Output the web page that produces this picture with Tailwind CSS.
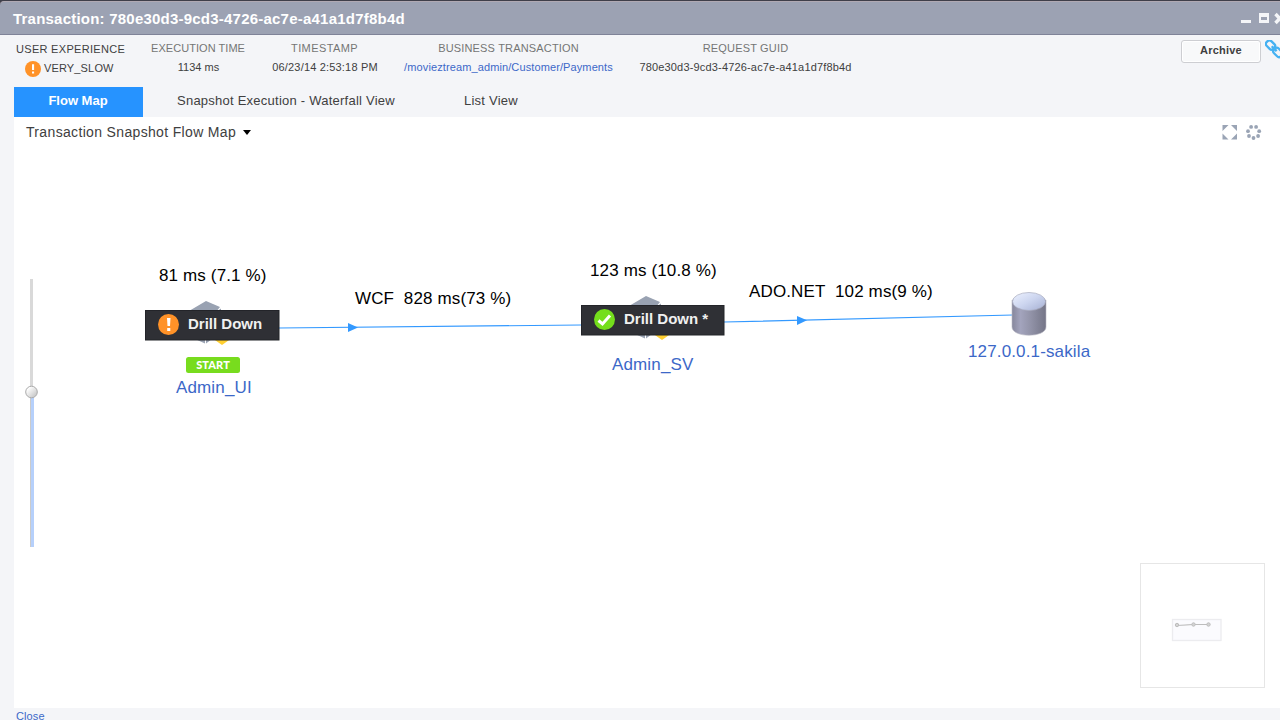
<!DOCTYPE html>
<html lang="en">
<head>
<meta charset="utf-8">
<title>Transaction Snapshot</title>
<script src="https://cdn.jsdelivr.net/npm/@tailwindcss/browser@4"></script>
</head>
<body class="bg-[#3f3f4a] font-['Liberation_Sans',Arial,sans-serif] overflow-hidden">
<div class="flex h-[720px] w-[1280px] flex-col overflow-hidden pt-px">
  <header class="flex h-[34px] shrink-0 items-center justify-between rounded-tl-[4px] border-t border-b border-t-[#b0a9b3] border-b-[#7f8398] bg-[#9ca2b3] pl-[13px]">
    <h1 class="pt-[2px] text-[15px] leading-[18px] font-bold tracking-[0.22px] whitespace-nowrap text-white">Transaction: 780e30d3-9cd3-4726-ac7e-a41a1d7f8b4d</h1>
    <svg class="h-[14px] w-[40px]" viewBox="0 0 40 14" fill="none">
      <rect x="1" y="9" width="10" height="3" fill="#f4f5f8"/>
      <path d="M19 2H29V12H19ZM21 6V9H27V6Z" fill="#f4f5f8" fill-rule="evenodd"/>
      <path d="M35.5 3L44 12M44 3L35.5 12" stroke="#f4f5f8" stroke-width="3.4"/>
    </svg>
  </header>

  <div class="flex min-h-0 flex-1 flex-col bg-[#f4f5f8]">
    <section class="flex h-[52px] shrink-0 justify-between text-[11px] leading-[13px] whitespace-nowrap text-[#404040]">
      <div class="flex gap-[26px] pt-[7px] pl-4">
        <div class="w-[109px]">
          <div class="pt-px tracking-[0.3px]">USER EXPERIENCE</div>
          <div class="mt-[4px] flex items-center pl-[9px]">
            <svg class="mt-px h-4 w-4" viewBox="0 0 16 16"><circle cx="8" cy="8" r="8" fill="#ff9228"/><path d="M7 3.2H9.1V9H7ZM7 10.6H9.1V12.6H7Z" fill="#fff"/></svg>
            <span class="ml-[3px] tracking-[0.15px]">VERY_SLOW</span>
          </div>
        </div>
        <div class="w-[94px] text-center">
          <div class="tracking-[0.05px] text-[#757575]">EXECUTION TIME</div>
          <div class="-mr-px mt-[6px]">1134 ms</div>
        </div>
        <div class="w-[107px] text-center">
          <div class="tracking-[0.4px] text-[#757575]">TIMESTAMP</div>
          <div class="-mr-px mt-[6px] tracking-[0.18px]">06/23/14 2:53:18 PM</div>
        </div>
        <div class="w-[209px] text-center">
          <div class="tracking-[0.17px] text-[#757575]">BUSINESS TRANSACTION</div>
          <div class="mt-[6px] tracking-[0.11px] text-[#3c68c8]">/movieztream_admin/Customer/Payments</div>
        </div>
        <div class="w-[213px] text-center">
          <div class="tracking-[0.17px] text-[#757575]">REQUEST GUID</div>
          <div class="mt-[6px] tracking-[0.17px]">780e30d3-9cd3-4726-ac7e-a41a1d7f8b4d</div>
        </div>
      </div>
      <div class="flex gap-1 pt-[5px]">
        <button class="h-[23px] w-[80px] rounded-[3px] border border-[#cdced2] bg-[#f8f9fa] pb-[3px] text-[11px] leading-[13px] font-bold tracking-[0.2px] text-[#404040] shadow-[inset_0_0_0_1px_#fff]">Archive</button>
        <svg class="h-[22px] w-[15px]" viewBox="0 0 15 22" fill="none" stroke="#45b1f2" stroke-width="2.3">
          <g transform="translate(5.3,4.8) rotate(45)"><rect x="-4.500" y="-3.300" width="9.500" height="6.600" rx="2.600"/><rect x="6" y="-3.300" width="9.500" height="6.600" rx="2.600"/><path d="M2 0H9"/></g>
        </svg>
      </div>
    </section>

    <nav class="flex h-[30px] shrink-0 pl-[14px] text-[13px] leading-[28px] whitespace-nowrap text-[#404040]">
      <a class="w-[129px] bg-[#2693ff] pr-px text-center font-bold text-white">Flow Map</a>
      <a class="pl-[34px] tracking-[0.24px]">Snapshot Execution - Waterfall View</a>
      <a class="pl-[69px] tracking-[0.24px]">List View</a>
    </nav>

    <main class="relative ml-[14px] h-[591px] shrink-0 bg-white">
      <div class="flex h-[30px] items-center justify-between pr-[18px] pl-[12px]">
        <div class="flex items-center text-[14px] leading-[16px] tracking-[0.34px] text-[#404040]">Transaction Snapshot Flow Map
          <svg class="mt-px ml-[7px] h-[5px] w-[8px]" viewBox="0 0 8 5"><path d="M0 0H8L4 5Z" fill="#000"/></svg>
        </div>
        <div class="flex gap-2">
          <svg class="h-[15px] w-[16px]" viewBox="0 0 16 15" fill="#9aa4b5"><path d="M0.500 0H6.500L0.500 6ZM9 0H15V6ZM0.500 8.500L6.500 14.500H0.500ZM15 8.500V14.500H9Z"/></svg>
          <svg class="h-[15px] w-[16px]" viewBox="0.500 0 16 15" fill="#9aa4b5"><circle cx="5.600" cy="1.900" r="1.900"/><circle cx="10.600" cy="1.900" r="1.900"/><circle cx="2.500" cy="6.200" r="1.900"/><circle cx="13.700" cy="6.200" r="1.900"/><circle cx="3.500" cy="11" r="1.900"/><circle cx="12.600" cy="11" r="1.900"/><circle cx="8" cy="13" r="1.900"/></svg>
        </div>
      </div>

      <!-- Flow map canvas -->
      <svg class="absolute top-0 left-0 h-[591px] w-[1266px]" viewBox="14 117 1266 591">
        <defs>
          <linearGradient id="side" x1="0" x2="1"><stop offset="0" stop-color="#86879c"/><stop offset=".25" stop-color="#a3a4bd"/><stop offset=".55" stop-color="#9293a8"/><stop offset="1" stop-color="#747587"/></linearGradient>
          <linearGradient id="lid" x1="0" x2="1" y1="0" y2="1"><stop offset="0" stop-color="#edf2ff"/><stop offset=".5" stop-color="#ccd5ef"/><stop offset="1" stop-color="#a5afd2"/></linearGradient>
          <linearGradient id="knob" x1="0" x2="1" y1="0" y2="1"><stop offset=".2" stop-color="#fff"/><stop offset="1" stop-color="#bbb"/></linearGradient>
        </defs>
        <g stroke="#3399ff" stroke-width="1.200"><path d="M279 328L581 325M724 322L1013 315"/></g>
        <path d="M348 323L358 327.500L348 332ZM797 316L807 320.300L797 325Z" fill="#3399ff"/>
        <g id="cube-left">
          <path d="M189 311L206 301L220 307L216 312V318H189Z" fill="#99a2b2"/>
          <path d="M217 311L221 308.500V312Z" fill="#99a2b2"/>
          <path d="M195 339H205V343.500ZM206 339H212L206 343.500Z" fill="#99a2b2"/>
          <path d="M212 338H232L222 345Z" fill="#ffcf30"/>
        </g>
        <use href="#cube-left" x="440" y="-5"/>
        <rect x="145.500" y="310.500" width="133.500" height="29.500" fill="#2f3035" stroke="#232429"/>
        <rect x="581.500" y="305.500" width="142.500" height="29.500" fill="#2f3035" stroke="#232429"/>
        <circle cx="168.500" cy="324.500" r="10.500" fill="#ff9228"/>
        <path d="M167 318H170.500L170 326H167.500ZM167.200 328H170.300V331H167.200Z" fill="#fff"/>
        <circle cx="604.500" cy="319.500" r="10.500" fill="#74de1c"/>
        <path d="M598.500 320.500L602.500 324L610 315.500" fill="none" stroke="#fff" stroke-width="3"/>
        <rect x="186" y="357" width="54" height="16" rx="2.500" fill="#78dc1e"/>
        <path d="M1012 300V327C1012 338 1046 338 1046 327V300Z" fill="url(#side)" stroke="#b9b9c4" stroke-width=".6"/>
        <ellipse cx="1029" cy="301.500" rx="16.500" ry="9" fill="url(#lid)" stroke="#a8aabd" stroke-width=".7"/>
        <rect x="30" y="279" width="3" height="113" fill="#d9d9d9"/>
        <rect x="30" y="392" width="1" height="155" fill="#cbcbcb"/>
        <rect x="31" y="392" width="3" height="155" fill="#b6d0fb"/>
        <circle cx="31.500" cy="392" r="5.800" fill="url(#knob)" stroke="#aaa"/>
        <rect x="1140.500" y="563.500" width="124" height="124" fill="#fff" stroke="#e6e6e6"/>
        <rect x="1172.500" y="619.500" width="48.500" height="21" fill="#fbfbfe" stroke="#ececef" stroke-width="1.300"/>
        <g stroke="#bdbdbd" fill="#d4d4d4"><path d="M1177 625.500L1193 624.500H1208"/><circle cx="1177" cy="625" r="1.700"/><circle cx="1193.500" cy="624.500" r="1.700"/><circle cx="1208.500" cy="624.500" r="1.700"/></g>
      </svg>
      <div class="text-[17px] leading-[18px] tracking-[0.14px] whitespace-pre text-black">
        <span class="absolute top-[150px] left-[145px]">81 ms (7.1 %)</span>
        <span class="absolute top-[145px] left-[576px]">123 ms (10.8 %)</span>
        <span class="absolute top-[173px] left-[341px]">WCF  828 ms(73 %)</span>
        <span class="absolute top-[166px] left-[735px]">ADO.NET  102 ms(9 %)</span>
        <span class="absolute top-[262px] left-[162px] text-[#3c68c8]">Admin_UI</span>
        <span class="absolute top-[239px] left-[598px] text-[#3c68c8]">Admin_SV</span>
        <span class="absolute top-[226px] left-[954px] text-[#3c68c8]">127.0.0.1-sakila</span>
      </div>
      <div class="text-[15px] leading-[18px] font-bold whitespace-nowrap text-[#f0f0f0]">
        <span class="absolute top-[198px] left-[174px]">Drill Down</span>
        <span class="absolute top-[193px] left-[610px]">Drill Down *</span>
      </div>
      <span class="absolute top-[241px] left-[172px] w-[54px] text-center font-[Lato,sans-serif] text-[11px] leading-[14px] font-black tracking-[0.1px] text-white">START</span>
    </main>
    <footer class="pt-[2px] pl-[16px] text-[11px] leading-[13px] tracking-[0.1px] text-[#3c68c8]">Close</footer>
  </div>
</div>
</body>
</html>
